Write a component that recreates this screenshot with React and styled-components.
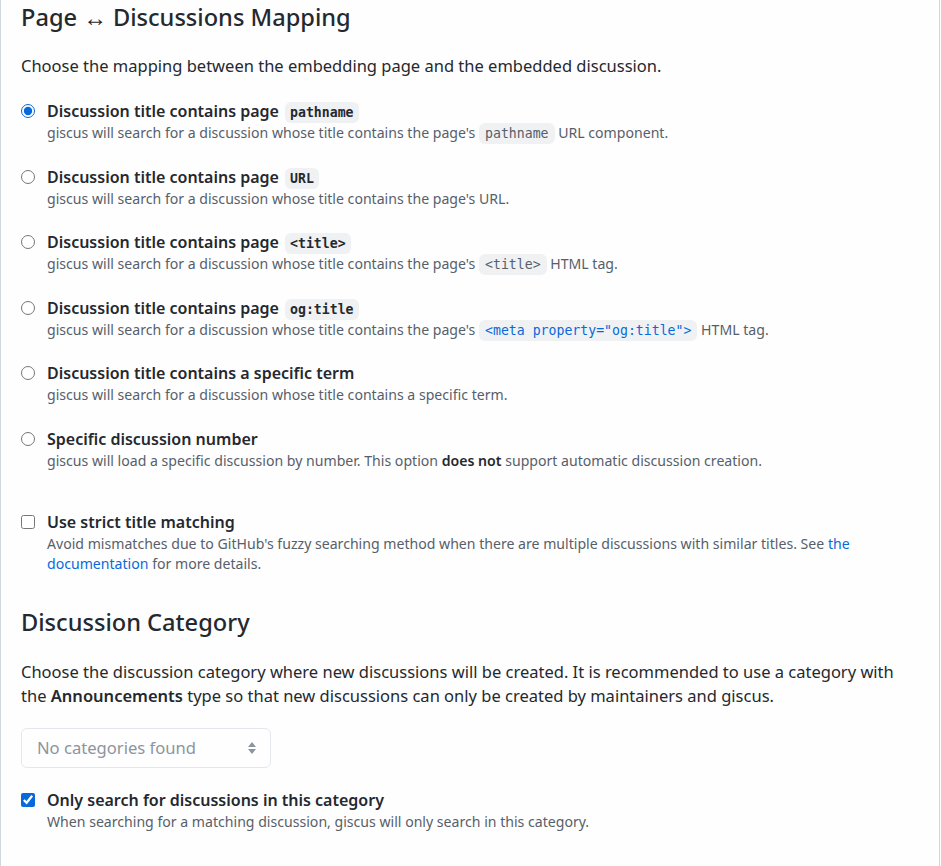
import styled, { createGlobalStyle } from 'styled-components';

const GlobalStyle = createGlobalStyle`
  body {
    margin: 0;
    background: #ffffff;
    font-family: "Noto Sans", "Liberation Sans", sans-serif;
    color: #24292f;
  }
`

const Panel = styled.div`
  width: 940px;
  box-sizing: border-box;
  min-height: 866px;
  padding: 2px 19px 0 20px;
  border-left: 1px solid #d0d7de;
  border-right: 1px solid #d0d7de;
  background: #fefefe;
`

const Heading = styled.h2`
  margin: ${p => (p.$top ? '33px' : '0')} 0 ${p => (p.$top ? '23px' : '22px')};
  font-size: 23.6px;
  line-height: 30px;
  font-weight: 500;
`

const Lead = styled.p`
  margin: 0;
  font-size: 16.5px;
  line-height: 24px;
  strong { font-weight: 600; }
`

const OptionList = styled.div`
  display: flex;
  flex-direction: column;
  gap: 21.6px;
  margin-top: 21px;
`

const Option = styled.label`
  display: flex;
  align-items: flex-start;
  margin-top: ${p => (p.$spaced ? '39px' : '20px')};
  ${OptionList} & { margin-top: 0; }
`

const Control = styled.input`
  width: 14px;
  height: 14px;
  margin: 5px 12px 0 0;
  flex: none;
  accent-color: #0969da;
`

const OptionBody = styled.div`
  display: flex;
  flex-direction: column;
`

const OptionTitle = styled.div`
  font-size: 16px;
  line-height: 24px;
  font-weight: 600;
`

const TitleCode = styled.code`
  margin-left: 6px;
  padding: 3px 5px;
  border-radius: 6px;
  background: #eff1f3;
  font-family: "DejaVu Sans Mono", "Liberation Mono", monospace;
  font-size: 13.2px;
  line-height: 1;
  font-weight: 700;
`

const OptionDesc = styled.div`
  font-size: 14.1px;
  line-height: 20px;
  color: #57606a;
  strong { font-weight: 600; color: #24292f; }
`

const DescCode = styled.code`
  padding: 3px 6px;
  border-radius: 6px;
  background: #eff1f3;
  font-family: "DejaVu Sans Mono", "Liberation Mono", monospace;
  font-size: 13.2px;
  line-height: 1;
  color: ${p => (p.$link ? '#0969da' : '#57606a')};
`

const Link = styled.a`
  color: #0969da;
  text-decoration: none;
`

const Select = styled.div`
  width: 250px;
  height: 40px;
  box-sizing: border-box;
  margin-top: 20px;
  padding: 0 13px 0 15px;
  display: flex;
  align-items: center;
  justify-content: space-between;
  border: 1px solid #e4e7eb;
  border-radius: 6px;
  font-size: 16.6px;
  color: #8c959f;
`

const options = [
  {
    title: 'Discussion title contains page',
    code: 'pathname',
    checked: true,
    desc: <>giscus will search for a discussion whose title contains the page's <DescCode>pathname</DescCode> URL component.</>,
  },
  {
    title: 'Discussion title contains page',
    code: 'URL',
    desc: <>giscus will search for a discussion whose title contains the page's URL.</>,
  },
  {
    title: 'Discussion title contains page',
    code: '<title>',
    desc: <>giscus will search for a discussion whose title contains the page's <DescCode>&lt;title&gt;</DescCode> HTML tag.</>,
  },
  {
    title: 'Discussion title contains page',
    code: 'og:title',
    desc: <>giscus will search for a discussion whose title contains the page's <DescCode $link>&lt;meta property="og:title"&gt;</DescCode> HTML tag.</>,
  },
  {
    title: 'Discussion title contains a specific term',
    desc: <>giscus will search for a discussion whose title contains a specific term.</>,
  },
  {
    title: 'Specific discussion number',
    desc: <>giscus will load a specific discussion by number. This option <strong>does not</strong> support automatic discussion creation.</>,
  },
]

export default function App() {
  return (
    <>
      <GlobalStyle />
      <Panel>
        <Heading>Page ↔ Discussions Mapping</Heading>
        <Lead>Choose the mapping between the embedding page and the embedded discussion.</Lead>

        <OptionList>
          {options.map((o, i) => (
            <Option key={i}>
              <Control type="radio" name="mapping" defaultChecked={o.checked} />
              <OptionBody>
                <OptionTitle>
                  {o.title}
                  {o.code && <TitleCode>{o.code}</TitleCode>}
                </OptionTitle>
                <OptionDesc>{o.desc}</OptionDesc>
              </OptionBody>
            </Option>
          ))}
        </OptionList>

        <Option $spaced>
          <Control type="checkbox" />
          <OptionBody>
            <OptionTitle>Use strict title matching</OptionTitle>
            <OptionDesc>
              Avoid mismatches due to GitHub's fuzzy searching method when there are multiple discussions with similar titles. See <Link>the documentation</Link> for more details.
            </OptionDesc>
          </OptionBody>
        </Option>

        <Heading $top>Discussion Category</Heading>
        <Lead>
          Choose the discussion category where new discussions will be created. It is recommended to use a category with the <strong>Announcements</strong> type so that new discussions can only be created by maintainers and giscus.
        </Lead>

        <Select>
          <span>No categories found</span>
          <svg width="10" height="14" viewBox="0 0 10 14">
            <path d="M5 1 L9 6 H1 Z" fill="#8c959f" />
            <path d="M5 13 L9 8 H1 Z" fill="#8c959f" />
          </svg>
        </Select>

        <Option>
          <Control type="checkbox" defaultChecked />
          <OptionBody>
            <OptionTitle>Only search for discussions in this category</OptionTitle>
            <OptionDesc>When searching for a matching discussion, giscus will only search in this category.</OptionDesc>
          </OptionBody>
        </Option>
      </Panel>
    </>
  )
}
